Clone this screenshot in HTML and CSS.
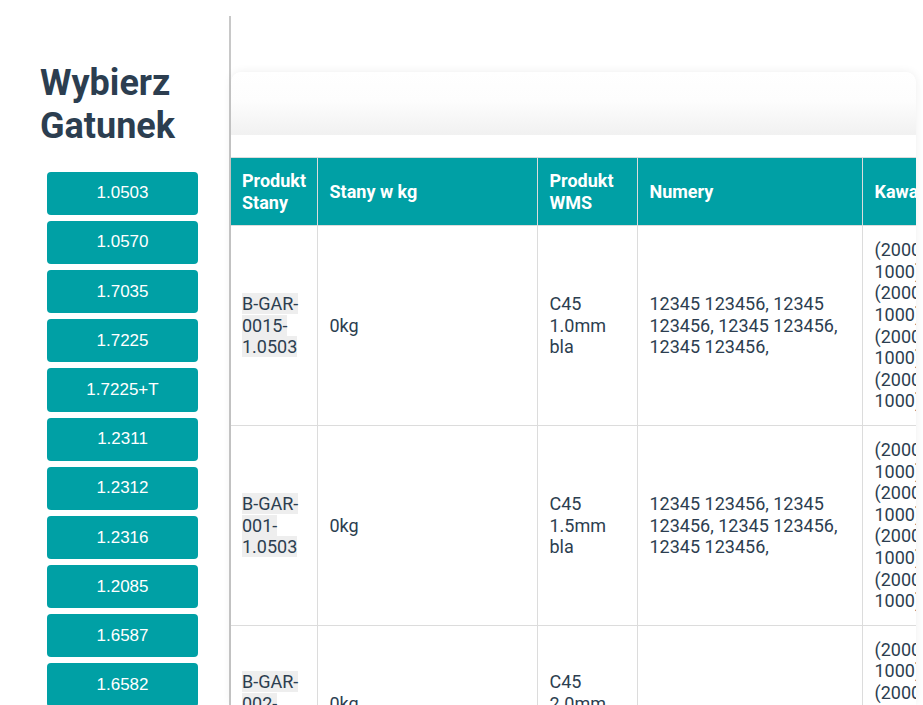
FILE: index.html
```html
<!DOCTYPE html>
<html lang="pl">
<head>
<meta charset="utf-8">
<title>Wybierz Gatunek</title>
<link rel="stylesheet" href="styles.css">
</head>
<body>
<div class="page">
  <aside class="sidebar">
    <h1 class="title">Wybierz Gatunek</h1>
    <div class="grades">
      <button class="grade">1.0503</button>
      <button class="grade">1.0570</button>
      <button class="grade">1.7035</button>
      <button class="grade">1.7225</button>
      <button class="grade">1.7225+T</button>
      <button class="grade">1.2311</button>
      <button class="grade">1.2312</button>
      <button class="grade">1.2316</button>
      <button class="grade">1.2085</button>
      <button class="grade">1.6587</button>
      <button class="grade">1.6582</button>
      <button class="grade">1.4301</button>
    </div>
  </aside>
  <main class="main">
    <div class="panel">
      <div class="panel-head"></div>
      <div class="table-wrap">
        <table class="stock">
          <colgroup>
            <col class="c1"><col class="c2"><col class="c3"><col class="c4"><col class="c5">
          </colgroup>
          <thead>
            <tr>
              <th>Produkt Stany</th>
              <th>Stany w kg</th>
              <th>Produkt WMS</th>
              <th>Numery</th>
              <th>Kawałki</th>
            </tr>
          </thead>
          <tbody>
            <tr>
              <td><span class="code">B-GAR-0015-1.0503</span></td>
              <td>0kg</td>
              <td>C45 1.0mm bla</td>
              <td>12345 123456, 12345 123456, 12345 123456, 12345 123456,</td>
              <td>(2000 x 1000), (2000 x 1000), (2000 x 1000), (2000 x 1000),</td>
            </tr>
            <tr>
              <td><span class="code">B-GAR-001-1.0503</span></td>
              <td>0kg</td>
              <td>C45 1.5mm bla</td>
              <td>12345 123456, 12345 123456, 12345 123456, 12345 123456,</td>
              <td>(2000 x 1000), (2000 x 1000), (2000 x 1000), (2000 x 1000),</td>
            </tr>
            <tr>
              <td><span class="code">B-GAR-002-1.0503</span></td>
              <td>0kg</td>
              <td>C45 2.0mm bla</td>
              <td></td>
              <td>(2000 x 1000), (2000 x 1000), (2000 x 1000),</td>
            </tr>
          </tbody>
        </table>
      </div>
    </div>
  </main>
</div>
</body>
</html>
```
FILE: styles.css
```css
html, body {
  margin: 0;
  padding: 0;
  background: #fff;
}
.page {
  display: flex;
  height: 705px;
  overflow: hidden;
  padding-top: 16px;
  box-sizing: border-box;
  font-family: Roboto, "Liberation Sans", sans-serif;
  color: #2c3e50;
}
.sidebar {
  width: 229px;
  flex: 0 0 229px;
  border-right: 2px solid #c8c8c8;
}
.title {
  margin: 45.6px 0 0 40px;
  font-family: Roboto, sans-serif;
  font-weight: 700;
  font-size: 36px;
  line-height: 43.2px;
  color: #2c3e50;
}
.grades {
  display: flex;
  flex-direction: column;
  gap: 6px;
  margin: 23.6px 0 0 47px;
}
.grade {
  width: 151px;
  height: 43.2px;
  flex: 0 0 43.2px;
  border: none;
  border-radius: 4px;
  background: #00a0a5;
  color: #fff;
  font-family: "Liberation Sans", Arial, sans-serif;
  font-size: 17px;
  padding: 0;
  margin: 0;
}
.main {
  flex: 0 0 685px;
  width: 685px;
  padding-top: 56px;
}
.panel {
  height: 100%;
  border-radius: 10px 10px 0 0;
  box-shadow: 0 0 10px rgba(0, 0, 0, 0.07);
  background: #fff;
  overflow: hidden;
}
.panel-head {
  height: 63px;
  background: linear-gradient(to bottom, #ffffff 0%, #fdfdfd 45%, #f1f1f1 100%);
  border-radius: 10px 10px 0 0;
  margin-bottom: 22px;
}
.table-wrap {
  overflow: hidden;
}
.stock {
  border-collapse: collapse;
  table-layout: fixed;
  width: 731px;
  font-size: 18px;
  line-height: 21.6px;
}
.c1 { width: 86px; }
.c2 { width: 220px; }
.c3 { width: 100px; }
.c4 { width: 225px; }
.c5 { width: 100px; }
.stock th, .stock td {
  border: 1px solid #dcdcdc;
  padding: 13px 12px;
  text-align: left;
  vertical-align: middle;
}
.stock th {
  padding-top: 12px;
  padding-bottom: 12px;
}
.stock tr > :first-child {
  border-left: none;
  padding-left: 11px;
}
.stock th {
  background: #00a0a5;
  color: #fff;
  font-weight: 700;
}
.stock td {
  color: #2c3e50;
}
.code {
  background: #eeeeee;
}
```
